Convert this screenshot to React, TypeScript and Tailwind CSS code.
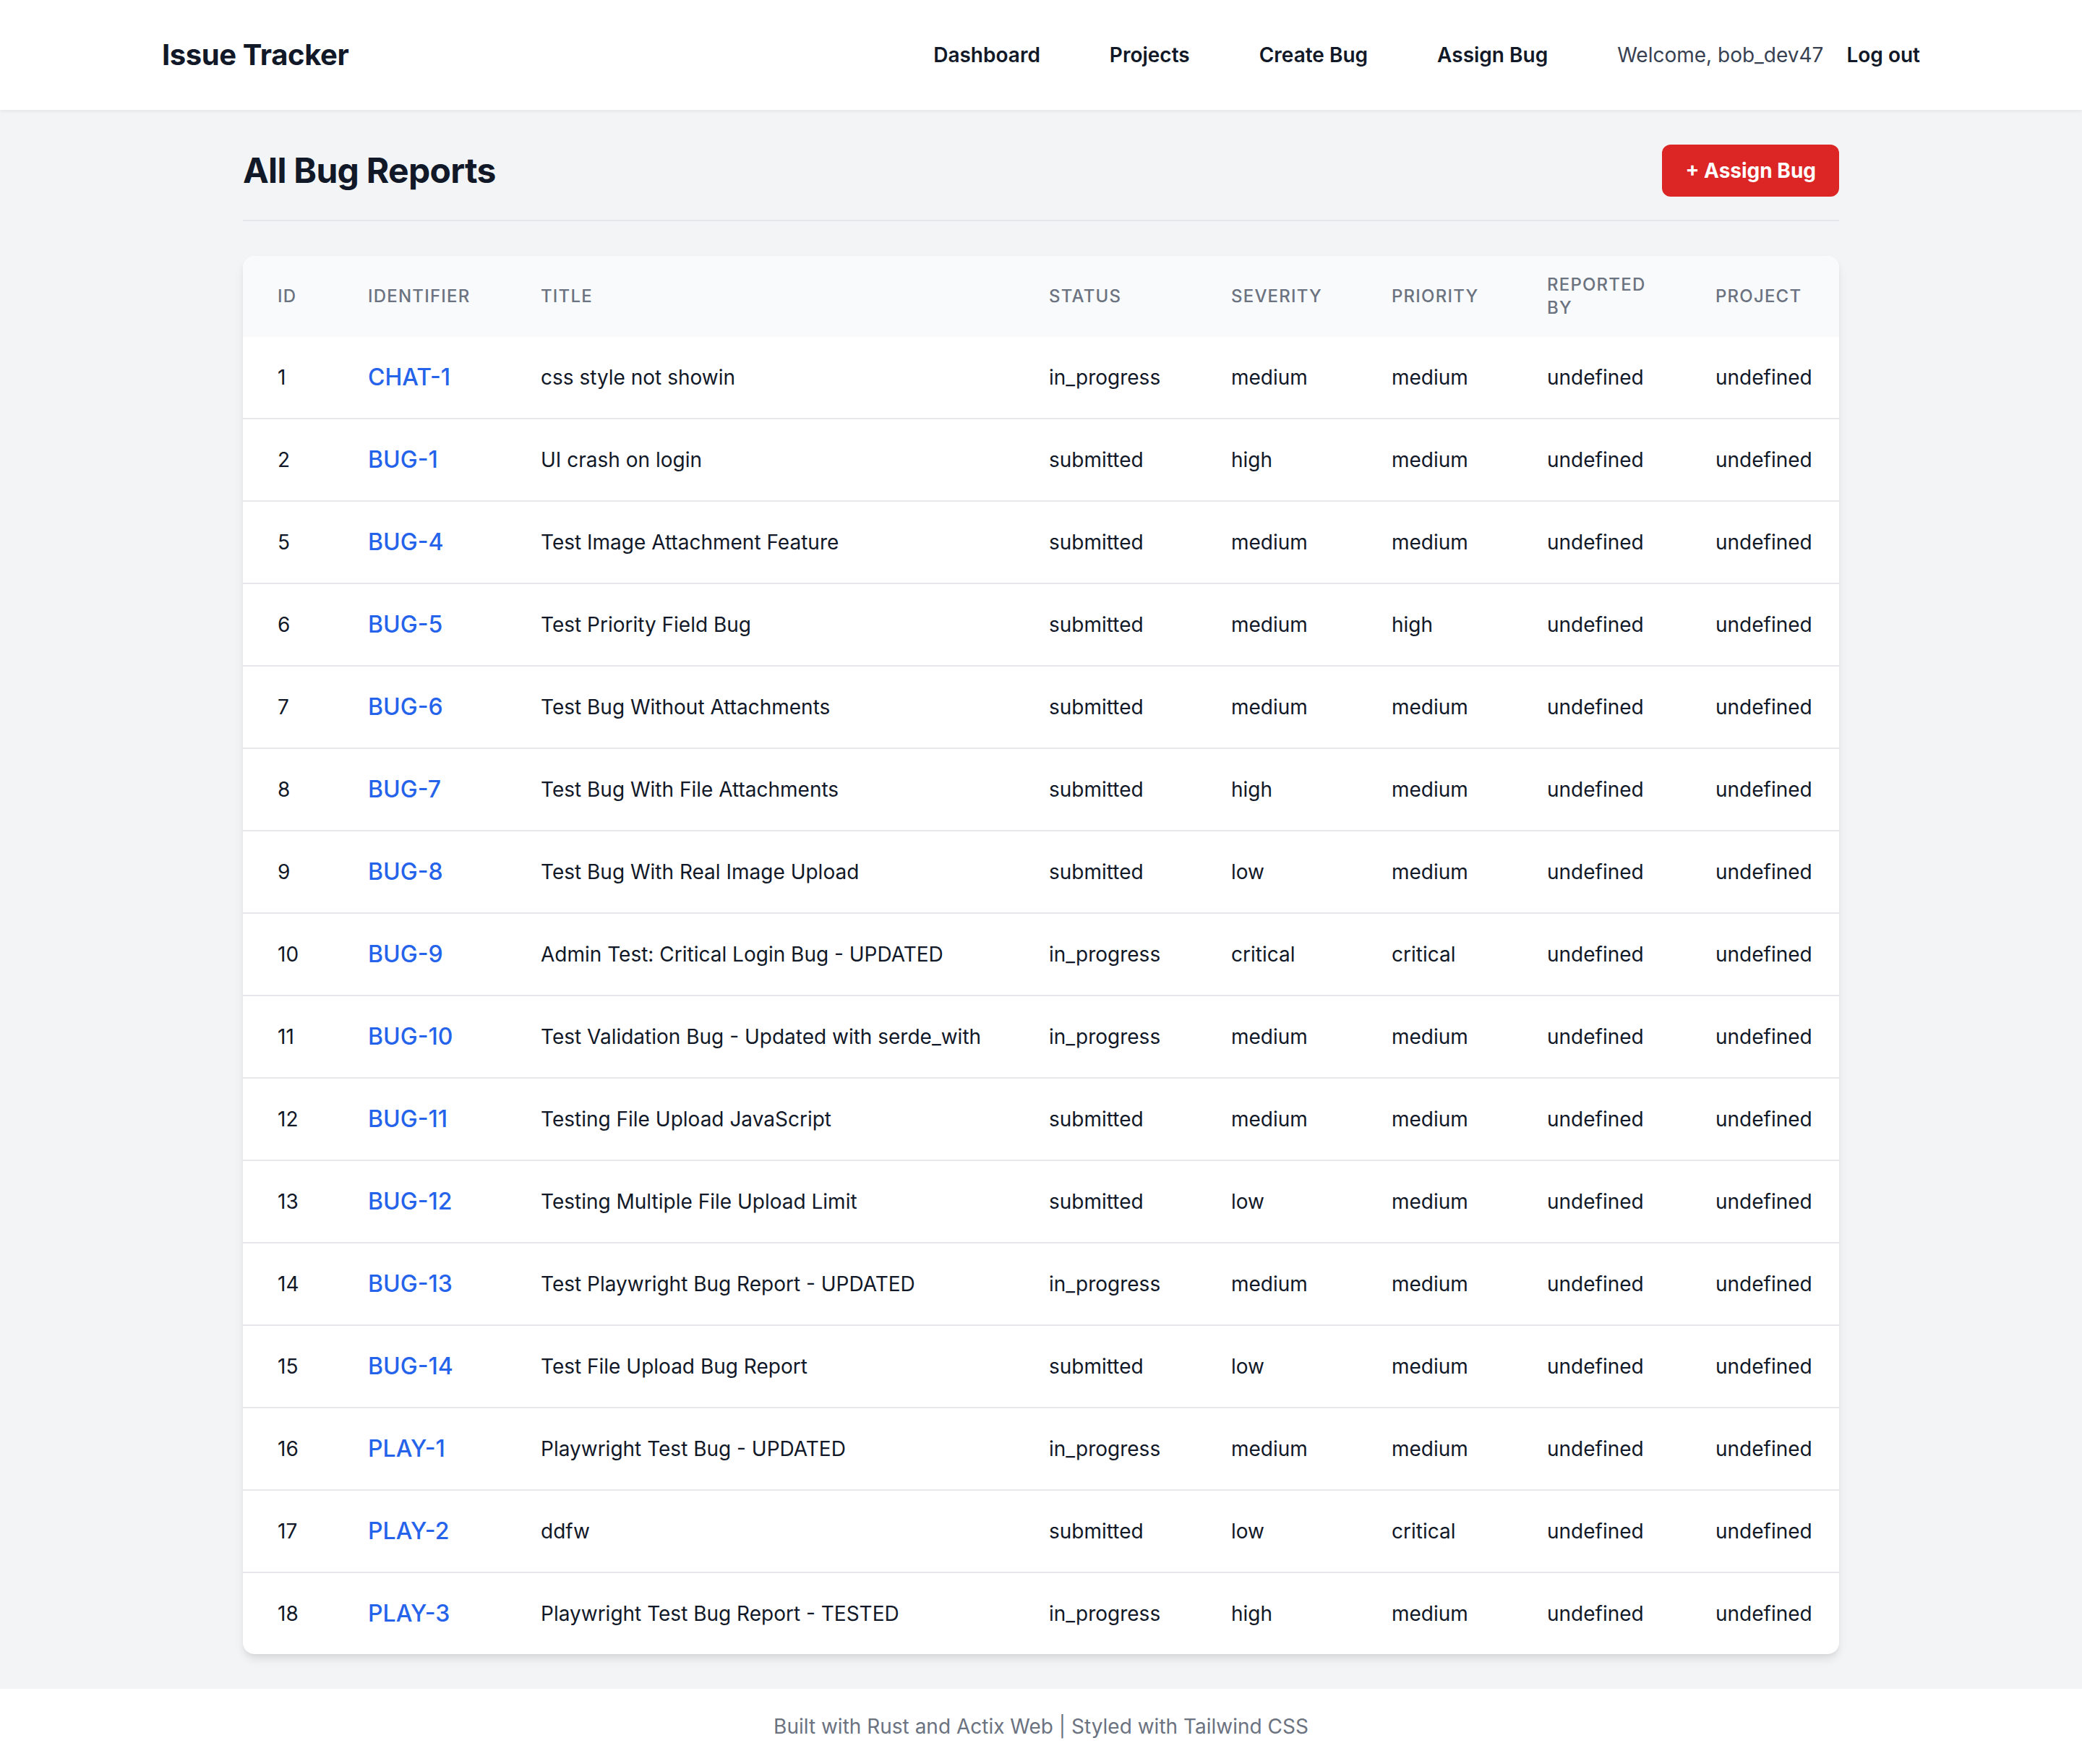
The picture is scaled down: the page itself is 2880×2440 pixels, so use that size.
type Bug = {
  id: number;
  identifier: string;
  title: string;
  status: string;
  severity: string;
  priority: string;
};

const bugs: Bug[] = [
  { id: 1, identifier: 'CHAT-1', title: 'css style not showin', status: 'in_progress', severity: 'medium', priority: 'medium' },
  { id: 2, identifier: 'BUG-1', title: 'UI crash on login', status: 'submitted', severity: 'high', priority: 'medium' },
  { id: 5, identifier: 'BUG-4', title: 'Test Image Attachment Feature', status: 'submitted', severity: 'medium', priority: 'medium' },
  { id: 6, identifier: 'BUG-5', title: 'Test Priority Field Bug', status: 'submitted', severity: 'medium', priority: 'high' },
  { id: 7, identifier: 'BUG-6', title: 'Test Bug Without Attachments', status: 'submitted', severity: 'medium', priority: 'medium' },
  { id: 8, identifier: 'BUG-7', title: 'Test Bug With File Attachments', status: 'submitted', severity: 'high', priority: 'medium' },
  { id: 9, identifier: 'BUG-8', title: 'Test Bug With Real Image Upload', status: 'submitted', severity: 'low', priority: 'medium' },
  { id: 10, identifier: 'BUG-9', title: 'Admin Test: Critical Login Bug - UPDATED', status: 'in_progress', severity: 'critical', priority: 'critical' },
  { id: 11, identifier: 'BUG-10', title: 'Test Validation Bug - Updated with serde_with', status: 'in_progress', severity: 'medium', priority: 'medium' },
  { id: 12, identifier: 'BUG-11', title: 'Testing File Upload JavaScript', status: 'submitted', severity: 'medium', priority: 'medium' },
  { id: 13, identifier: 'BUG-12', title: 'Testing Multiple File Upload Limit', status: 'submitted', severity: 'low', priority: 'medium' },
  { id: 14, identifier: 'BUG-13', title: 'Test Playwright Bug Report - UPDATED', status: 'in_progress', severity: 'medium', priority: 'medium' },
  { id: 15, identifier: 'BUG-14', title: 'Test File Upload Bug Report', status: 'submitted', severity: 'low', priority: 'medium' },
  { id: 16, identifier: 'PLAY-1', title: 'Playwright Test Bug - UPDATED', status: 'in_progress', severity: 'medium', priority: 'medium' },
  { id: 17, identifier: 'PLAY-2', title: 'ddfw', status: 'submitted', severity: 'low', priority: 'critical' },
  { id: 18, identifier: 'PLAY-3', title: 'Playwright Test Bug Report - TESTED', status: 'in_progress', severity: 'high', priority: 'medium' },
];

const columns = [
  { label: 'ID', width: 'w-[125px]' },
  { label: 'Identifier', width: 'w-[239px]' },
  { label: 'Title', width: 'w-[703px]' },
  { label: 'Status', width: 'w-[252px]' },
  { label: 'Severity', width: 'w-[222px]' },
  { label: 'Priority', width: 'w-[215px]' },
  { label: 'Reported By', width: 'w-[233px]' },
  { label: 'Project', width: 'w-[219px]' },
];

export default function App() {
  return (
    <div className="min-h-screen flex flex-col bg-[#f3f4f6] font-['Inter',sans-serif] text-[#111827]">
      {/* Top nav */}
      <nav className="bg-white shadow-[0_2px_6px_rgba(0,0,0,0.06)] relative z-10">
        <div className="max-w-[2560px] mx-auto px-16 h-[152px] flex items-center justify-between">
          <a href="#" className="text-[40px] leading-[56px] font-bold tracking-[-0.01em] text-[#111827]">
            Issue Tracker
          </a>
          <div className="flex items-center gap-24 text-[28px] leading-[40px]">
            <a href="#" className="font-semibold text-[#111827]">Dashboard</a>
            <a href="#" className="font-semibold text-[#111827]">Projects</a>
            <a href="#" className="font-semibold text-[#111827]">Create Bug</a>
            <a href="#" className="font-semibold text-[#111827]">Assign Bug</a>
            <div className="flex items-center gap-8">
              <span className="text-[#374151]">Welcome, bob_dev47</span>
              <button className="font-semibold text-[#111827]">Log out</button>
            </div>
          </div>
        </div>
      </nav>

      {/* Main content */}
      <main className="flex-1">
        <div className="max-w-[2304px] mx-auto px-12 pt-12 pb-12">
          <div className="flex items-center justify-between pb-8 border-b-2 border-[#e5e7eb] mb-12">
            <h1 className="text-[48px] leading-[64px] font-bold tracking-[-0.015em] text-[#111827]">All Bug Reports</h1>
            <button className="bg-[#dc2626] text-white font-bold text-[28px] leading-[40px] px-8 py-4 rounded-xl">
              + Assign Bug
            </button>
          </div>

          <div className="bg-white rounded-2xl overflow-hidden shadow-[0_8px_14px_-2px_rgba(0,0,0,0.1),0_4px_8px_-4px_rgba(0,0,0,0.08)]">
            <table className="w-full table-fixed">
              <thead className="bg-[#f9fafb]">
                <tr>
                  {columns.map((col) => (
                    <th
                      key={col.label}
                      className={`${col.width} px-12 py-6 text-left text-[24px] leading-[32px] font-medium text-[#6b7280] uppercase tracking-wider`}
                    >
                      {col.label}
                    </th>
                  ))}
                </tr>
              </thead>
              <tbody className="divide-y-2 divide-[#e5e7eb]">
                {bugs.map((bug) => (
                  <tr key={bug.id}>
                    <td className="px-12 py-8 text-[28px] leading-[48px] whitespace-nowrap">{bug.id}</td>
                    <td className="px-12 py-8 text-[32px] leading-[48px] whitespace-nowrap">
                      <a href="#" className="font-medium text-[#2563eb]">{bug.identifier}</a>
                    </td>
                    <td className="px-12 py-8 text-[28px] leading-[48px] whitespace-nowrap">{bug.title}</td>
                    <td className="px-12 py-8 text-[28px] leading-[48px] whitespace-nowrap">{bug.status}</td>
                    <td className="px-12 py-8 text-[28px] leading-[48px] whitespace-nowrap">{bug.severity}</td>
                    <td className="px-12 py-8 text-[28px] leading-[48px] whitespace-nowrap">{bug.priority}</td>
                    <td className="px-12 py-8 text-[28px] leading-[48px] whitespace-nowrap">undefined</td>
                    <td className="px-12 py-8 text-[28px] leading-[48px] whitespace-nowrap">undefined</td>
                  </tr>
                ))}
              </tbody>
            </table>
          </div>
        </div>
      </main>

      {/* Footer */}
      <footer className="bg-white py-8">
        <p className="text-center text-[28px] leading-[40px] text-[#6b7280]">
          Built with Rust and Actix Web | Styled with Tailwind CSS
        </p>
      </footer>
    </div>
  );
}
